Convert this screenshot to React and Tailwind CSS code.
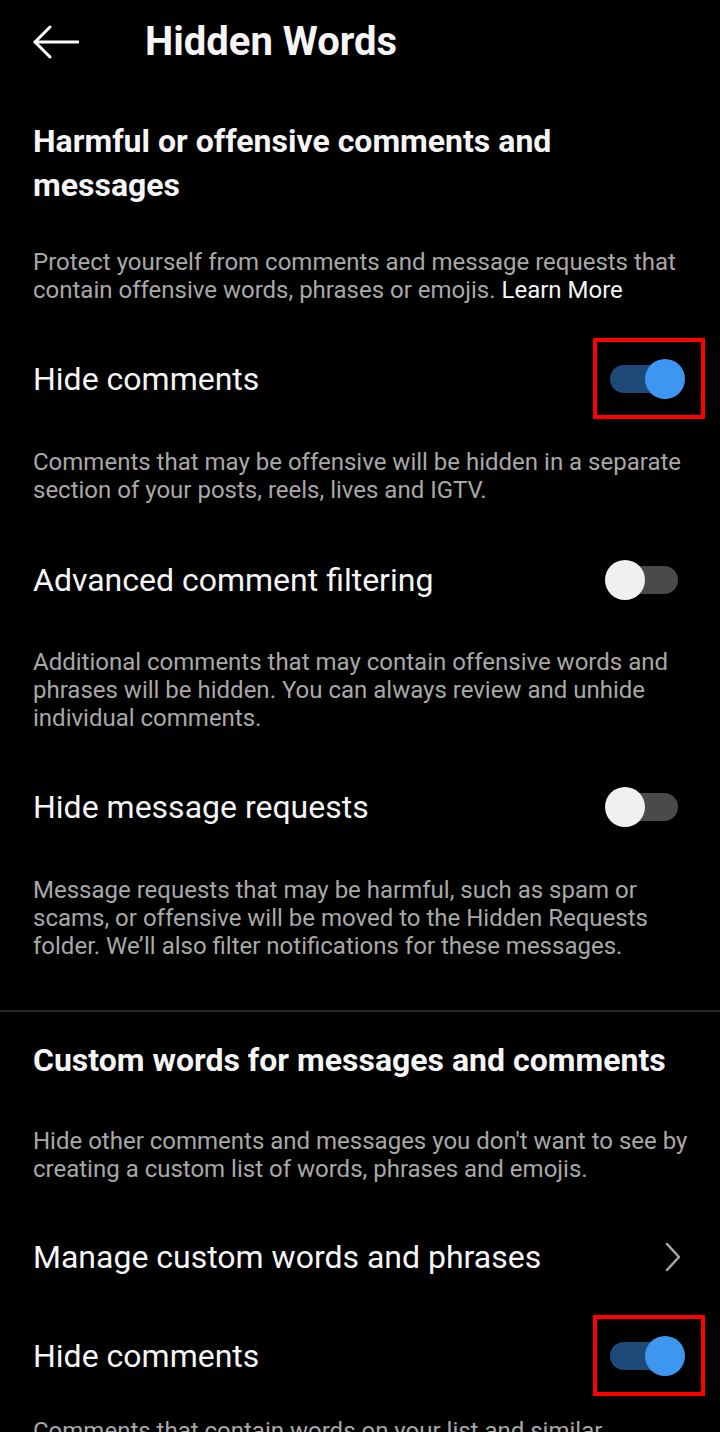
import React from 'react';

const font = { fontFamily: 'Roboto, "Noto Sans", sans-serif' };

const Toggle = ({ on, boxed }) => (
    <div className={`w-[112px] h-[81px] flex items-center pl-[8px] border-4 ${boxed ? 'border-[#ff0000]' : 'border-transparent'}`}>
        <div className="relative w-[80px] h-[40px]">
            <div className={`absolute left-[5px] top-[6px] w-[68px] h-[28px] rounded-full ${on ? 'bg-[#1d4a78]' : 'bg-[#4a4a4a]'}`}></div>
            <div className={`absolute top-0 w-[40px] h-[40px] rounded-full ${on ? 'left-[40px] bg-[#3d96ef]' : 'left-0 bg-[#f0f0f0]'}`}></div>
        </div>
    </div>
);

const ToggleRow = ({ label, on, boxed, className = '' }) => (
    <div className={`flex items-center justify-between pl-[33px] pr-[15px] h-[81px] ${className}`}>
        <span className="text-[32px] text-[#f5f5f5] leading-none">{label}</span>
        <Toggle on={on} boxed={boxed} />
    </div>
);

const Desc = ({ children, className = '' }) => (
    <p className={`pl-[33px] pr-[30px] text-[24px] leading-[28px] text-[#a8a8a8] ${className}`}>{children}</p>
);

export default function App() {
    return (
        <div className="w-[720px] h-[1432px] bg-black overflow-hidden" style={font}>
            <div className="flex items-center h-[84px] pl-[33px]">
                <svg width="46" height="34" viewBox="0 0 46 34" fill="none" stroke="#ffffff" strokeWidth="3" strokeLinecap="round" strokeLinejoin="round">
                    <path d="M2 17H45" />
                    <path d="M17 2L2 17L17 32" />
                </svg>
                <h1 className="ml-[66px] text-[40px] font-bold text-[#f5f5f5] leading-none">Hidden Words</h1>
            </div>

            <h2 className="mt-[35px] pl-[33px] pr-[30px] text-[32px] leading-[44px] font-bold text-[#f5f5f5]">
                Harmful or offensive comments and messages
            </h2>
            <Desc className="mt-[41px]">
                Protect yourself from comments and message requests that contain offensive words, phrases or emojis.{' '}
                <span className="text-[#f5f5f5]">Learn More</span>
            </Desc>

            <ToggleRow label="Hide comments" on boxed className="mt-[34px]" />
            <Desc className="mt-[29px]">
                Comments that may be offensive will be hidden in a separate section of your posts, reels, lives and IGTV.
            </Desc>

            <ToggleRow label="Advanced comment filtering" className="mt-[35px]" />
            <Desc className="mt-[28px]">
                Additional comments that may contain offensive words and phrases will be hidden. You can always review and unhide individual comments.
            </Desc>

            <ToggleRow label="Hide message requests" className="mt-[34px]" />
            <Desc className="mt-[29px]">
                Message requests that may be harmful, such as spam or scams, or offensive will be moved to the Hidden Requests folder. We’ll also filter notifications for these messages.
            </Desc>

            <div className="mt-[50px] h-[2px] bg-[#262626]"></div>

            <h2 className="mt-[26px] pl-[33px] pr-[20px] text-[32px] leading-[44px] font-bold text-[#f5f5f5]">
                Custom words for messages and comments
            </h2>
            <Desc className="mt-[45px]">
                Hide other comments and messages you don't want to see by creating a custom list of words, phrases and emojis.
            </Desc>

            <div className="mt-[34px] flex items-center justify-between pl-[33px] pr-[38px] h-[80px]">
                <span className="text-[32px] text-[#f5f5f5] leading-none">Manage custom words and phrases</span>
                <svg width="18" height="30" viewBox="0 0 18 30" fill="none" stroke="#a8a8a8" strokeWidth="2.5" strokeLinecap="round" strokeLinejoin="round">
                    <path d="M3 2L15 15L3 28" />
                </svg>
            </div>

            <ToggleRow label="Hide comments" on boxed className="mt-[18px]" />
            <Desc className="mt-[21px]">
                Comments that contain words on your list and similar misspellings will be hidden.
            </Desc>
        </div>
    );
}
